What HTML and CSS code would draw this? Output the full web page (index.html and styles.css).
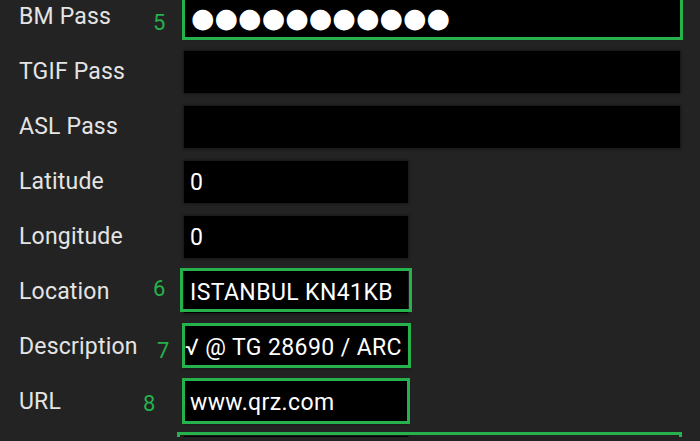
FILE: index.html
```html
<!DOCTYPE html>
<html lang="en">
<head>
<meta charset="utf-8">
<title>Settings</title>
<link rel="stylesheet" href="styles.css">
</head>
<body>
<main class="form">
  <div class="row">
    <span class="label">BM Pass</span>
    <span class="tag tag-5">5</span>
    <div class="hl hl-bm"><div class="field wide"><span class="dots">●●●●●●●●●●●</span></div></div>
  </div>
  <div class="row">
    <span class="label">TGIF Pass</span>
    <div class="field wide"></div>
  </div>
  <div class="row">
    <span class="label">ASL Pass</span>
    <div class="field wide"></div>
  </div>
  <div class="row">
    <span class="label">Latitude</span>
    <div class="field narrow">0</div>
  </div>
  <div class="row">
    <span class="label">Longitude</span>
    <div class="field narrow">0</div>
  </div>
  <div class="row">
    <span class="label">Location</span>
    <span class="tag tag-6">6</span>
    <div class="hl hl-loc"><div class="field narrow">ISTANBUL KN41KB</div></div>
  </div>
  <div class="row">
    <span class="label">Description</span>
    <span class="tag tag-7">7</span>
    <div class="hl hl-desc"><div class="field narrow scrolled">√ @ TG 28690 / ARC</div></div>
  </div>
  <div class="row">
    <span class="label">URL</span>
    <span class="tag tag-8">8</span>
    <div class="hl hl-url"><div class="field narrow">www.qrz.com</div></div>
  </div>
  <div class="row">
    <span class="label"></span>
    <div class="hl hl-last"><div class="field narrow"></div></div>
  </div>
</main>
</body>
</html>
```

FILE: styles.css
```css
html, body {
  margin: 0;
  padding: 0;
  background: #232323;
  overflow: hidden;
}

body {
  font-family: Roboto, "Liberation Sans", sans-serif;
  width: 700px;
  height: 441px;
}

.form {
  display: flex;
  flex-direction: column;
  gap: 13px;
  margin-top: -4px;
  padding-left: 19px;
  height: 441px;
  overflow: hidden;
}

.row {
  position: relative;
  display: flex;
  align-items: center;
  height: 42px;
  flex: none;
}

.label {
  width: 165px;
  flex: none;
  font-size: 23px;
  letter-spacing: 0.2px;
  color: #e4e4e4;
  margin-top: -2px;
}

.field {
  box-sizing: border-box;
  height: 42px;
  background: #000;
  box-shadow: 0 0 2px 1px #171717;
  padding-left: 6px;
  display: flex;
  align-items: center;
  color: #fff;
  font-size: 23px;
  letter-spacing: 0.4px;
  white-space: nowrap;
  overflow: hidden;
}

.wide { width: 496px; }
.narrow { width: 224px; }

.scrolled { padding-left: 1px; }

.dots {
  font-family: "DejaVu Sans", sans-serif;
  font-size: 27px;
  letter-spacing: 0;
  color: #fff;
  margin-top: 1px;
  margin-left: 1px;
}

.hl {
  position: relative;
  flex: none;
}

.hl::after {
  content: "";
  position: absolute;
  border: 3px solid #25b14b;
  pointer-events: none;
}

.hl-bm::after   { top: -8px; bottom: -2px; left: -2px; right: -3px; }
.hl-loc::after  { top: -3px; bottom: 1px;  left: -4px; right: -4px; }
.hl-desc::after { top: -3px; bottom: 0;    left: -2px; right: -3px; }
.hl-url::after  { top: -3px; bottom: -1px; left: -2px; right: -2px; }
.hl-last::after { top: -4px; bottom: -8px; left: -7px; right: -274px; }

.tag {
  position: absolute;
  font-size: 22px;
  line-height: 22px;
  color: #25b14b;
}

.tag-5 { left: 134px; top: 16px; }
.tag-6 { left: 134px; top: 7px; }
.tag-7 { left: 138px; top: 14px; }
.tag-8 { left: 124px; top: 12px; }
```
